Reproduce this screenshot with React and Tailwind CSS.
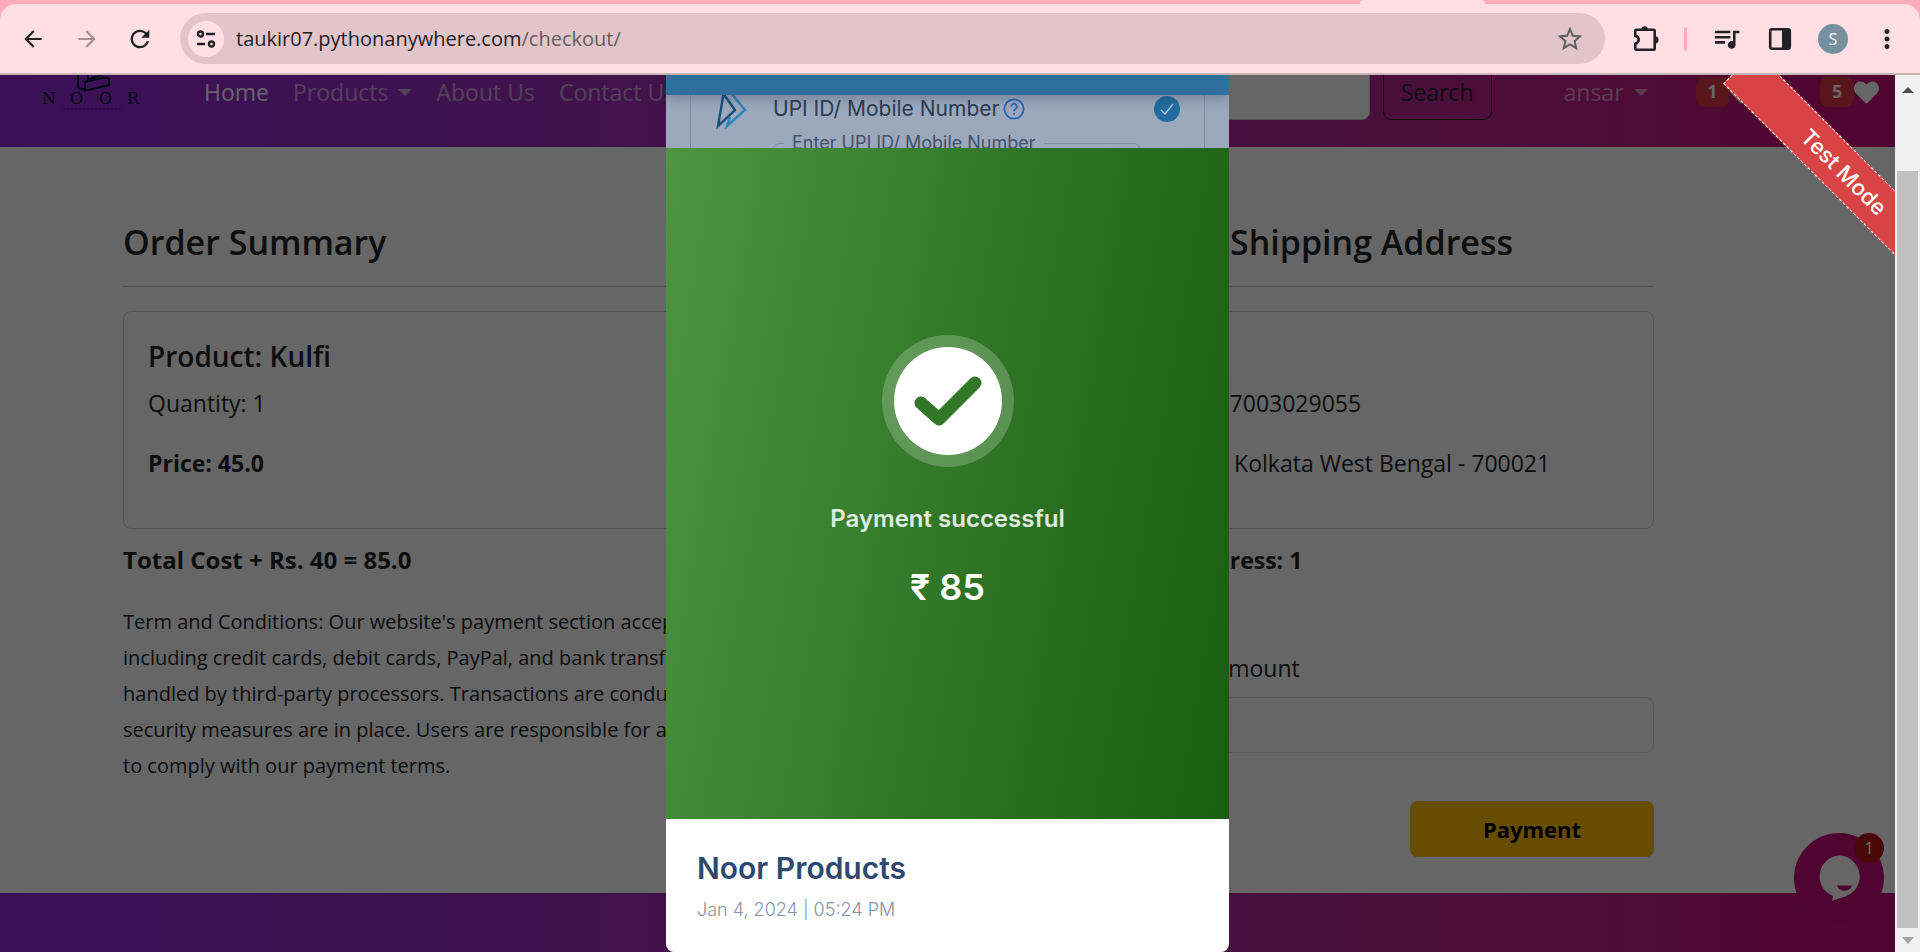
import { FaHeart } from "react-icons/fa";
import { MdArrowBack, MdArrowForward, MdRefresh, MdStarBorder, MdQueueMusic, MdMoreVert } from "react-icons/md";

const terms = [
  "Term and Conditions: Our website's payment section accepts",
  "including credit cards, debit cards, PayPal, and bank transfers",
  "handled by third-party processors. Transactions are conducted",
  "security measures are in place. Users are responsible for accurate",
  "to comply with our payment terms.",
];

function Toolbar() {
  return (
    <header className="shrink-0 bg-[#ffacbb] font-['Open_Sans',sans-serif]">
      <div className="flex h-1 justify-end pr-[435px]">
        <div className="h-1 w-[125px] rounded-t bg-[#ffdfe4]" />
      </div>
      <div className="flex h-[71px] items-center rounded-t-2xl border-b-2 border-[#c9b3b7] bg-[#ffdfe4] pr-[18px] pl-5 text-[#1f2124]">
        <button aria-label="Back" className="mr-7"><MdArrowBack size={26} /></button>
        <button aria-label="Forward" className="mr-[26px] text-[#a68e93]"><MdArrowForward size={26} /></button>
        <button aria-label="Reload" className="mr-[26px]"><MdRefresh size={28} /></button>
        <div className="flex h-[51px] min-w-0 grow items-center rounded-full bg-[#e1c5ca] pr-5 pl-2">
          <button aria-label="Site information" className="flex size-9 items-center justify-center rounded-full bg-[#ffdfe4]">
            <svg width="20" height="20" viewBox="0 0 20 20" fill="none" stroke="currentColor" strokeWidth="2.4">
              <circle cx="4.5" cy="5" r="2.5" /><path d="M10 5h9M1 15h8" /><circle cx="15.5" cy="15" r="2.5" />
            </svg>
          </button>
          <span className="ml-3 grow text-xl">taukir07.pythonanywhere.com<span className="text-[#685c60]">/checkout/</span></span>
          <button aria-label="Bookmark" className="text-[#5f6064]"><MdStarBorder size={30} /></button>
        </div>
        <button aria-label="Extensions" className="ml-[27px]">
          <svg width="28" height="28" viewBox="0 0 28 28">
            <path d="M4.5 4.8h17q1.2 0 1.2 1.2v17.5q0 1.2-1.2 1.2h-17q-1.2 0-1.2-1.2v-4.7q3.4-1 3.4-4t-3.4-4V6q0-1.2 1.2-1.2z" fill="none" stroke="currentColor" strokeWidth="2.6" />
            <path d="M9.5 4.5a3.2 3.2 0 0 1 6.4 0zM23 11.2a3.6 3.6 0 0 1 0 7.2z" fill="currentColor" />
          </svg>
        </button>
        <div className="ml-6 h-6 w-[3px] rounded bg-[#ffacbb]" />
        <button aria-label="Media" className="ml-6"><MdQueueMusic size={31} /></button>
        <button aria-label="Side panel" className="ml-[26px]">
          <svg width="24" height="24" viewBox="0 0 24 24"><rect x="2.2" y="2.2" width="19.6" height="19.6" rx="2" fill="none" stroke="currentColor" strokeWidth="2.6" /><path d="M14 2h8v20h-8z" fill="currentColor" /></svg>
        </button>
        <button aria-label="Profile" className="ml-[26px] flex size-[30px] items-center justify-center rounded-full bg-[#77909d] text-base text-white">S</button>
        <button aria-label="Menu" className="ml-6"><MdMoreVert size={30} /></button>
      </div>
    </header>
  );
}

function Navbar() {
  return (
    <nav className="-mt-[38px] flex h-[110px] shrink-0 items-center bg-linear-to-r from-[#9028dc] to-[#c80c78] pl-10 text-[23px] text-white/55">
      <svg width="106" height="76" viewBox="0 0 106 76" className="shrink-0 text-[#061830]" fill="none" stroke="currentColor">
        <path d="M38 18v14q0 2.500 3 2.800l4 .4M48 18v9M45 28l5-3 16-6 3 1M45 28v9l24-6v-6q-1-2-5-1.500z" strokeWidth="2" />
        <text x="2 30 59 87" y="50" fontSize="16" fill="currentColor" stroke="none" fontFamily="DejaVu Serif, serif">NOOR</text>
        <path d="M23 55h60" strokeWidth="1" strokeDasharray="2 2" strokeOpacity="0.5" />
      </svg>
      <a href="#home" className="ml-[58px] text-white">Home</a>
      <a href="#products" className="ml-6 flex items-center">Products<Caret /></a>
      <a href="#about" className="ml-6">About Us</a>
      <a href="#contact" className="ml-6">Contact Us</a>
      <div className="min-w-0 grow" />
      <input aria-label="Search products" className="h-14 w-[200px] rounded-lg border border-[#ced4da] bg-white" />
      <button className="ml-[13px] h-14 rounded-lg border border-[#212529] px-[17px] text-[#212529]">Search</button>
      <a href="#account" className="ml-[72px] flex items-center">ansar<Caret /></a>
      <Counter n="1" className="ml-12" />
      <Counter n="5" className="ml-[66px] mr-4" />
    </nav>
  );
}

function Caret() {
  return <span className="ml-2.5 border-x-[7px] border-t-[7px] border-x-transparent border-t-current" />;
}

function Counter({ n, className }) {
  return (
    <a href="#items" className={`flex items-center text-white ${className}`}>
      <span className="rounded-lg bg-[#dc3545] px-3 py-1 text-[17px] leading-[22px] font-bold">{n}</span>
      <FaHeart size={25} />
    </a>
  );
}

function Checkout() {
  return (
    <main className="flex grow justify-between pt-[71px] pr-[241px] pl-[123px]">
      <section className="w-[850px]">
        <h2 className="text-[34px] leading-12 font-semibold">Order Summary</h2>
        <hr className="mt-5 mb-6 border-[#ccc]" />
        <div className="h-[218px] rounded-lg border border-[#d0d0d0] px-6 pt-6">
          <h4 className="text-[28px] leading-10 font-semibold">Product: Kulfi</h4>
          <p className="mt-[7px] leading-[40px]">Quantity: 1</p>
          <p className="mt-5 leading-[40px] font-bold">Price: 45.0</p>
        </div>
        <p className="mt-[11px] text-2xl leading-[40px] font-bold">Total Cost + Rs. 40 = 85.0</p>
        <p className="mt-6 text-xl leading-9 whitespace-nowrap">
          {terms.map((line) => <span key={line} className="block">{line}</span>)}
        </p>
      </section>
      <section className="w-[510px]">
        <h2 className="text-[34px] leading-12 font-semibold">Your Shipping Address</h2>
        <hr className="mt-5 mb-6 border-[#ccc]" />
        <div className="h-[218px] rounded-lg border border-[#d0d0d0] px-6 pt-[71px]">
          <p className="leading-[40px]">Mob. 7003029055</p>
          <p className="mt-5 leading-[40px]">India, Kolkata West Bengal - 700021</p>
        </div>
        <p className="mt-[11px] leading-[40px] font-bold">My Address: 1</p>
        <label htmlFor="amount" className="mt-[68px] block leading-[40px]">Order Amount</label>
        <input id="amount" className="mt-[9px] h-14 w-full rounded-lg border border-[#dee2e6]" />
        <div className="mt-12 flex justify-end">
          <button className="h-14 w-[244px] rounded-lg bg-[#ffc107] text-[22px] font-bold text-black">Payment</button>
        </div>
      </section>
    </main>
  );
}

function PaymentDialog() {
  return (
    <div role="dialog" aria-label="Payment result" className="flex h-full w-[563px] flex-col overflow-hidden rounded-b-lg bg-white font-[Inter,sans-serif]">
      <div className="relative z-10 h-5 shrink-0 bg-[#306f9d] shadow-[0_4px_12px_rgba(20,40,80,0.3)]" />
      <div className="h-[53px] shrink-0 overflow-hidden bg-[#9ca8bc] px-6 text-[#2d3b52]">
        <div className="h-20 border-x border-[#8290a7] px-6">
          <div className="flex h-7 items-center">
            <svg width="32" height="34" viewBox="0 0 32 34" fill="none" strokeWidth="2.4" className="self-start">
              <path d="M17 -1 30 15 12 31l3-9" stroke="#2a84bd" /><path d="M8.500 -1 20 15 3 31z" stroke="#144f7c" />
            </svg>
            <span className="ml-[26px] text-[21px]">UPI ID/ Mobile Number</span>
            <svg width="22" height="22" viewBox="0 0 22 22" fill="none" stroke="#2765b8" strokeWidth="1.8" className="ml-1">
              <circle cx="11" cy="11" r="9.6" /><path d="M8.2 8.6a2.8 2.8 0 1 1 4.3 2.3c-1 .7-1.5 1.1-1.5 2.3M11 15v1.8" />
            </svg>
            <svg width="26" height="26" viewBox="0 0 26 26" className="ml-auto"><circle cx="13" cy="13" r="13" fill="#216da1" /><path d="m7 14 4 4 8-10" fill="none" stroke="#b5c4d8" strokeWidth="1.4" /></svg>
          </div>
          <fieldset className="mt-[7px] mr-10 ml-[58px] h-12 rounded-md border border-[#8290a7] pl-2.5 text-[#455269]">
            <legend className="px-2 text-lg leading-[26px]">Enter UPI ID/ Mobile Number</legend>
          </fieldset>
        </div>
      </div>
      <div className="flex grow flex-col items-center bg-[linear-gradient(100deg,#4c9542,#317727_50%,#1a5d0e)] pt-[187px] text-white">
        <svg width="132" height="132" viewBox="0 0 132 132">
          <circle cx="66" cy="66" r="66" fill="#fff" fillOpacity="0.22" /><circle cx="66" cy="66" r="54" fill="#fff" />
          <path d="M39 68 57 84 93 48" fill="none" stroke="#317727" strokeWidth="13" strokeLinecap="round" strokeLinejoin="round" />
        </svg>
        <p className="mt-9 text-2xl leading-8 font-semibold text-white/85">Payment successful</p>
        <p className="mt-6 text-4xl leading-[56px] font-semibold">₹ 85</p>
      </div>
      <div className="h-[133px] shrink-0 px-[31px] pt-[29px] text-[#2f4870]">
        <h3 className="text-3xl leading-10 font-semibold">Noor Products</h3>
        <p className="mt-2 text-lg leading-7 font-light text-[#8492ab]">Jan 4, 2024 | 05:24 PM</p>
      </div>
    </div>
  );
}

function ChatBubble() {
  return (
    <button aria-label="Open chat" className="absolute right-[11px] bottom-[29px] size-[90px]">
      <svg width="90" height="90" viewBox="0 0 90 90">
        <circle cx="45" cy="45" r="45" fill="#c80c78" />
        <path d="M45 22.500a21 21 0 0 1 12 38c-6 4-11 4-19 7.500l1-5A21 21 0 0 1 45 22.500z" fill="#fff" />
        <path d="M43 52.500h15c-2 7-13 7-15 0z" fill="#c80c78" />
        <circle cx="75" cy="15" r="15" fill="#b81414" />
      </svg>
      <span className="absolute top-0 right-0 w-[30px] text-center text-base leading-[30px] text-white">1</span>
    </button>
  );
}

export default function App() {
  return (
    <div className="flex h-screen flex-col overflow-hidden">
      <Toolbar />
      <div className="flex min-h-0 grow">
        <div className="relative min-w-0 grow overflow-hidden">
          <div className="flex h-full flex-col bg-white font-['Open_Sans',sans-serif] text-[23px] text-[#212529]">
            <Navbar />
            <Checkout />
            <footer className="h-[59px] shrink-0 bg-linear-to-r from-[#9028dc] to-[#c80c78]" />
          </div>
          <ChatBubble />
          <div className="absolute inset-0 flex justify-center bg-black/60">
            <PaymentDialog />
          </div>
          <div className="absolute top-[74px] -right-[97px] flex h-[46px] w-[296px] rotate-45 items-center justify-center border border-dashed border-white bg-[#d84444] font-[Inter,sans-serif] text-[22px] font-medium text-white">
            Test Mode
          </div>
        </div>
        <div aria-hidden="true" className="flex w-[25px] shrink-0 flex-col items-center bg-[#f1f1f1] pt-3 pb-2">
          <span className="border-x-[6px] border-b-[6px] border-x-transparent border-b-[#505050]" />
          <div className="mt-[78px] w-[21px] grow bg-[#c1c1c1]" />
          <span className="mt-[9px] border-x-[6px] border-t-[7px] border-x-transparent border-t-[#a3a3a3]" />
        </div>
      </div>
    </div>
  );
}
